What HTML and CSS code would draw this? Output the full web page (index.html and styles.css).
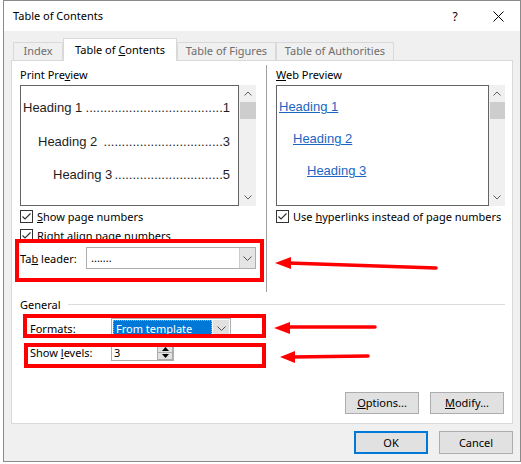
FILE: index.html
```html
<!DOCTYPE html>
<html>
<head>
<meta charset="utf-8">
<link rel="stylesheet" href="styles.css">
</head>
<body>
<div class="dialog">
  <div class="titlebar">
    <span class="title">Table of Contents</span>
    <span class="help">?</span>
    <svg class="close" width="11" height="11" viewBox="0 0 11 11"><path d="M0.5 0.5 L10.5 10.5 M10.5 0.5 L0.5 10.5" stroke="#000" stroke-width="1" fill="none"/></svg>
  </div>
  <div class="body">
    <div class="tabs">
      <div class="tab t-index">Index</div>
      <div class="tab active t-toc">Table of <u>C</u>ontents</div>
      <div class="tab t-fig">Table of Figures</div>
      <div class="tab t-auth">Table of Authorities</div>
    </div>
    <div class="panel">
      <div class="previews">
        <div class="col col-left">
          <div class="label">Print Pre<u>v</u>iew</div>
          <div class="preview-row">
            <div class="preview print">
              <div class="toc-line l1"><span>Heading 1</span><span class="lead">......................................</span><span>1</span></div>
              <div class="toc-line l2"><span>Heading 2&nbsp;</span><span class="lead">.................................</span><span>3</span></div>
              <div class="toc-line l3"><span>Heading 3</span><span class="lead">..............................</span><span>5</span></div>
            </div>
            <div class="scrollbar">
              <div class="sb-btn"><svg width="8" height="5" viewBox="0 0 8 5"><path d="M0.5 4.5 L4 1 L7.5 4.5" stroke="#606060" fill="none"/></svg></div>
              <div class="sb-thumb"></div>
              <div class="sb-track"></div>
              <div class="sb-btn"><svg width="8" height="5" viewBox="0 0 8 5"><path d="M0.5 0.5 L4 4 L7.5 0.5" stroke="#606060" fill="none"/></svg></div>
            </div>
          </div>
          <div class="check first">
            <svg class="cb" width="13" height="13" viewBox="0 0 13 13"><rect x="0.5" y="0.5" width="12" height="12" fill="#fff" stroke="#333"/><path d="M2.5 6.5 L5 9 L10.5 3.5" stroke="#333" stroke-width="1.2" fill="none"/></svg>
            <span><u>S</u>how page numbers</span>
          </div>
          <div class="check">
            <svg class="cb" width="13" height="13" viewBox="0 0 13 13"><rect x="0.5" y="0.5" width="12" height="12" fill="#fff" stroke="#333"/><path d="M2.5 6.5 L5 9 L10.5 3.5" stroke="#333" stroke-width="1.2" fill="none"/></svg>
            <span><u>R</u>ight align page numbers</span>
          </div>
          <div class="field tableader">
            <span class="field-label">Ta<u>b</u> leader:</span>
            <div class="combo leader">
              <span class="combo-text">.......</span>
              <span class="combo-btn"><svg width="9" height="5" viewBox="0 0 9 5"><path d="M0.5 0.5 L4.5 4.5 L8.5 0.5" stroke="#505050" fill="none"/></svg></span>
            </div>
          </div>
        </div>
        <div class="sep"></div>
        <div class="col col-right">
          <div class="label"><u>W</u>eb Preview</div>
          <div class="preview-row">
            <div class="preview web">
              <div class="web-line w1"><span>Heading 1</span></div>
              <div class="web-line w2"><span>Heading 2</span></div>
              <div class="web-line w3"><span>Heading 3</span></div>
            </div>
            <div class="scrollbar narrow">
              <div class="sb-btn"><svg width="8" height="5" viewBox="0 0 8 5"><path d="M0.5 4.5 L4 1 L7.5 4.5" stroke="#606060" fill="none"/></svg></div>
              <div class="sb-thumb"></div>
              <div class="sb-track"></div>
              <div class="sb-btn"><svg width="8" height="5" viewBox="0 0 8 5"><path d="M0.5 0.5 L4 4 L7.5 0.5" stroke="#606060" fill="none"/></svg></div>
            </div>
          </div>
          <div class="check first">
            <svg class="cb" width="13" height="13" viewBox="0 0 13 13"><rect x="0.5" y="0.5" width="12" height="12" fill="#fff" stroke="#333"/><path d="M2.5 6.5 L5 9 L10.5 3.5" stroke="#333" stroke-width="1.2" fill="none"/></svg>
            <span>Use <u>h</u>yperlinks instead of page numbers</span>
          </div>
        </div>
      </div>
      <div class="general">
        <div class="general-head"><span>General</span></div>
        <div class="grow formats">
          <span class="grow-label">Forma<u>t</u>s:</span>
          <div class="combo fmt">
            <span class="sel"><span>From template</span></span>
            <span class="combo-btn"><svg width="9" height="5" viewBox="0 0 9 5"><path d="M0.5 0.5 L4.5 4.5 L8.5 0.5" stroke="#505050" fill="none"/></svg></span>
          </div>
        </div>
        <div class="grow levels">
          <span class="grow-label">Show <u>l</u>evels:</span>
          <div class="spin">
            <span class="spin-text">3</span>
            <span class="spin-btns">
              <span class="spin-btn"><svg width="7" height="4" viewBox="0 0 7 4"><path d="M0 4 L3.5 0 L7 4 Z" fill="#000"/></svg></span>
              <span class="spin-btn"><svg width="7" height="4" viewBox="0 0 7 4"><path d="M0 0 L3.5 4 L7 0 Z" fill="#000"/></svg></span>
            </span>
          </div>
        </div>
      </div>
      <div class="panel-buttons">
        <div class="btn"><u>O</u>ptions...</div>
        <div class="btn"><u>M</u>odify...</div>
      </div>
    </div>
    <div class="footer">
      <div class="btn ok">OK</div>
      <div class="btn">Cancel</div>
    </div>
  </div>
</div>
<svg class="annotations" width="521" height="464" viewBox="0 0 521 464">
  <g fill="none" stroke="#ff0000" stroke-width="4">
    <rect x="17" y="241" width="245" height="39"/>
    <rect x="25" y="316" width="239" height="20"/>
    <rect x="26" y="345" width="238" height="21"/>
  </g>
  <g stroke="#ff0000" stroke-width="3.5" stroke-linecap="round">
    <line x1="436" y1="268" x2="288" y2="263"/>
    <line x1="375" y1="327" x2="287" y2="327"/>
    <line x1="368" y1="356" x2="292" y2="357"/>
  </g>
  <g fill="#ff0000">
    <polygon points="275,263 291,257 291,269"/>
    <polygon points="274,328 290,322 290,334"/>
    <polygon points="280,357 295,351 295,363"/>
  </g>
</svg>
</body>
</html>
```
FILE: styles.css
```css
* { box-sizing: border-box; }

body {
  margin: 0;
  width: 521px;
  height: 464px;
  overflow: hidden;
  background: #fff;
  font-family: "Noto Sans", "Liberation Sans", sans-serif;
  font-size: 11px;
  color: #000;
  position: relative;
}

.dialog {
  margin-left: 3px;
  width: 518px;
  height: 462px;
  border: 1px solid #8a8a8a;
  background: #f0f0f0;
  display: flex;
  flex-direction: column;
}

.titlebar {
  height: 30px;
  flex: none;
  background: #fff;
  display: flex;
  align-items: center;
  padding-left: 9px;
}
.title { flex: 1; line-height: 30px; }
.help { width: 8px; text-align: center; font-size: 12px; }
.close { margin: 0 16px 0 34px; display: block; }

.body { flex: 1; padding: 7px 0 0 7px; }

.tabs {
  display: flex;
  align-items: flex-end;
  height: 22px;
  padding-left: 2px;
  position: relative;
  z-index: 1;
}
.tab {
  height: 18px;
  border: 1px solid #d9d9d9;
  border-bottom: none;
  background: #f0f0f0;
  color: #6d6d6d;
  text-align: center;
  line-height: 16px;
  white-space: nowrap;
}
.tab.active {
  height: 23px;
  margin-bottom: -1px;
  background: #fff;
  color: #000;
  line-height: 21px;
}
.t-index { width: 50px; }
.t-toc { width: 114px; }
.t-fig { width: 99px; }
.t-auth { width: 118px; }

.panel {
  width: 502px;
  height: 364px;
  border: 1px solid #d9d9d9;
  background: #fff;
}

.previews {
  display: flex;
  height: 227px;
  margin: 4px 0 0 8px;
}
.col-left { width: 236px; }
.sep { width: 1px; background: #a0a0a0; margin-left: 10px; }
.col-right { width: 229px; margin-left: 9px; }

.label { height: 20px; line-height: 20px; }

.preview-row { display: flex; height: 121px; }
.preview { flex: 1; border: 1px solid #646464; background: #fff; overflow: hidden; }

.print { padding: 12px 8px 0 2px; }
.toc-line {
  display: flex;
  height: 20px;
  line-height: 20px;
  font-family: "Liberation Sans", "Noto Sans", sans-serif;
  font-size: 13px;
  color: #1e1e1e;
  white-space: nowrap;
}
.toc-line .lead { margin-left: auto; overflow: hidden; }
.l2 { margin-top: 14px; padding-left: 15px; }
.l3 { margin-top: 13px; padding-left: 30px; }

.web { padding: 11px 0 0 2px; }
.web-line {
  height: 20px;
  line-height: 20px;
  font-family: "Liberation Sans", "Noto Sans", sans-serif;
  font-size: 13px;
  color: #1a66c2;
}
.web-line span { text-decoration: underline; }
.w2 { margin-top: 12px; padding-left: 14px; }
.w3 { margin-top: 12px; padding-left: 28px; }

.scrollbar {
  width: 17px;
  background: #f0f0f0;
  display: flex;
  flex-direction: column;
}
.scrollbar.narrow { width: 16px; }
.sb-btn { height: 17px; display: flex; align-items: center; justify-content: center; }
.sb-btn svg { display: block; }
.sb-thumb { height: 17px; background: #cdcdcd; margin-left: 1px; }
.sb-track { flex: 1; }

.check {
  display: flex;
  align-items: center;
  height: 19px;
}
.check.first { margin-top: 1px; }
.cb { display: block; flex: none; margin-right: 4px; }

.field { display: flex; align-items: center; height: 22px; margin-top: 2px; }
.field-label { width: 66px; }

.combo {
  display: flex;
  border: 1px solid #adadad;
  background: #fff;
}
.combo.leader { width: 170px; height: 22px; }
.combo-text { flex: 1; padding-left: 4px; line-height: 20px; }
.combo-btn {
  width: 16px;
  background: #e5e5e5;
  border-left: 1px solid #cccccc;
  display: flex;
  align-items: center;
  justify-content: center;
}

.general { width: 485px; margin: 2px 0 0 8px; }
.general-head { display: flex; align-items: center; height: 20px; }
.general-head::after {
  content: "";
  flex: 1;
  height: 1px;
  background: #dcdcdc;
  margin-left: 7px;
}

.grow { display: flex; align-items: center; padding-left: 10px; }
.grow-label { width: 81px; }
.formats { margin-top: 4px; height: 20px; }
.levels { margin-top: 6px; height: 17px; }

.combo.fmt { width: 120px; height: 20px; padding: 1px; border-color: #adadad; }
.sel {
  flex: 1;
  background: #0078d7;
  color: #fff;
  display: flex;
  align-items: center;
  padding-left: 2px;
  border: 1px dotted #f0a040;
}
.combo.fmt .combo-btn { border-left: none; background: #e1e1e1; margin-left: 1px; }

.spin {
  display: flex;
  width: 63px;
  height: 17px;
  border: 1px solid #adadad;
  background: #fff;
}
.spin-text { flex: 1; padding-left: 2px; line-height: 15px; }
.spin-btns { width: 16px; display: flex; flex-direction: column; }
.spin-btn {
  flex: 1;
  background: #e1e1e1;
  border: 1px solid #adadad;
  display: flex;
  align-items: center;
  justify-content: center;
}
.spin-btn + .spin-btn { border-top: none; }

.panel-buttons {
  display: flex;
  justify-content: flex-end;
  gap: 11px;
  margin-top: 31px;
  padding-right: 8px;
}

.btn {
  width: 74px;
  height: 22px;
  background: #e1e1e1;
  border: 1px solid #adadad;
  text-align: center;
  line-height: 20px;
}

.footer {
  display: flex;
  justify-content: flex-end;
  gap: 11px;
  padding-right: 7px;
  margin-top: 7px;
}
.footer .btn { height: 23px; line-height: 21px; }
.footer .btn.ok { border: 2px solid #0078d7; line-height: 19px; }

.annotations {
  position: absolute;
  left: 0;
  top: 0;
  pointer-events: none;
}
```
